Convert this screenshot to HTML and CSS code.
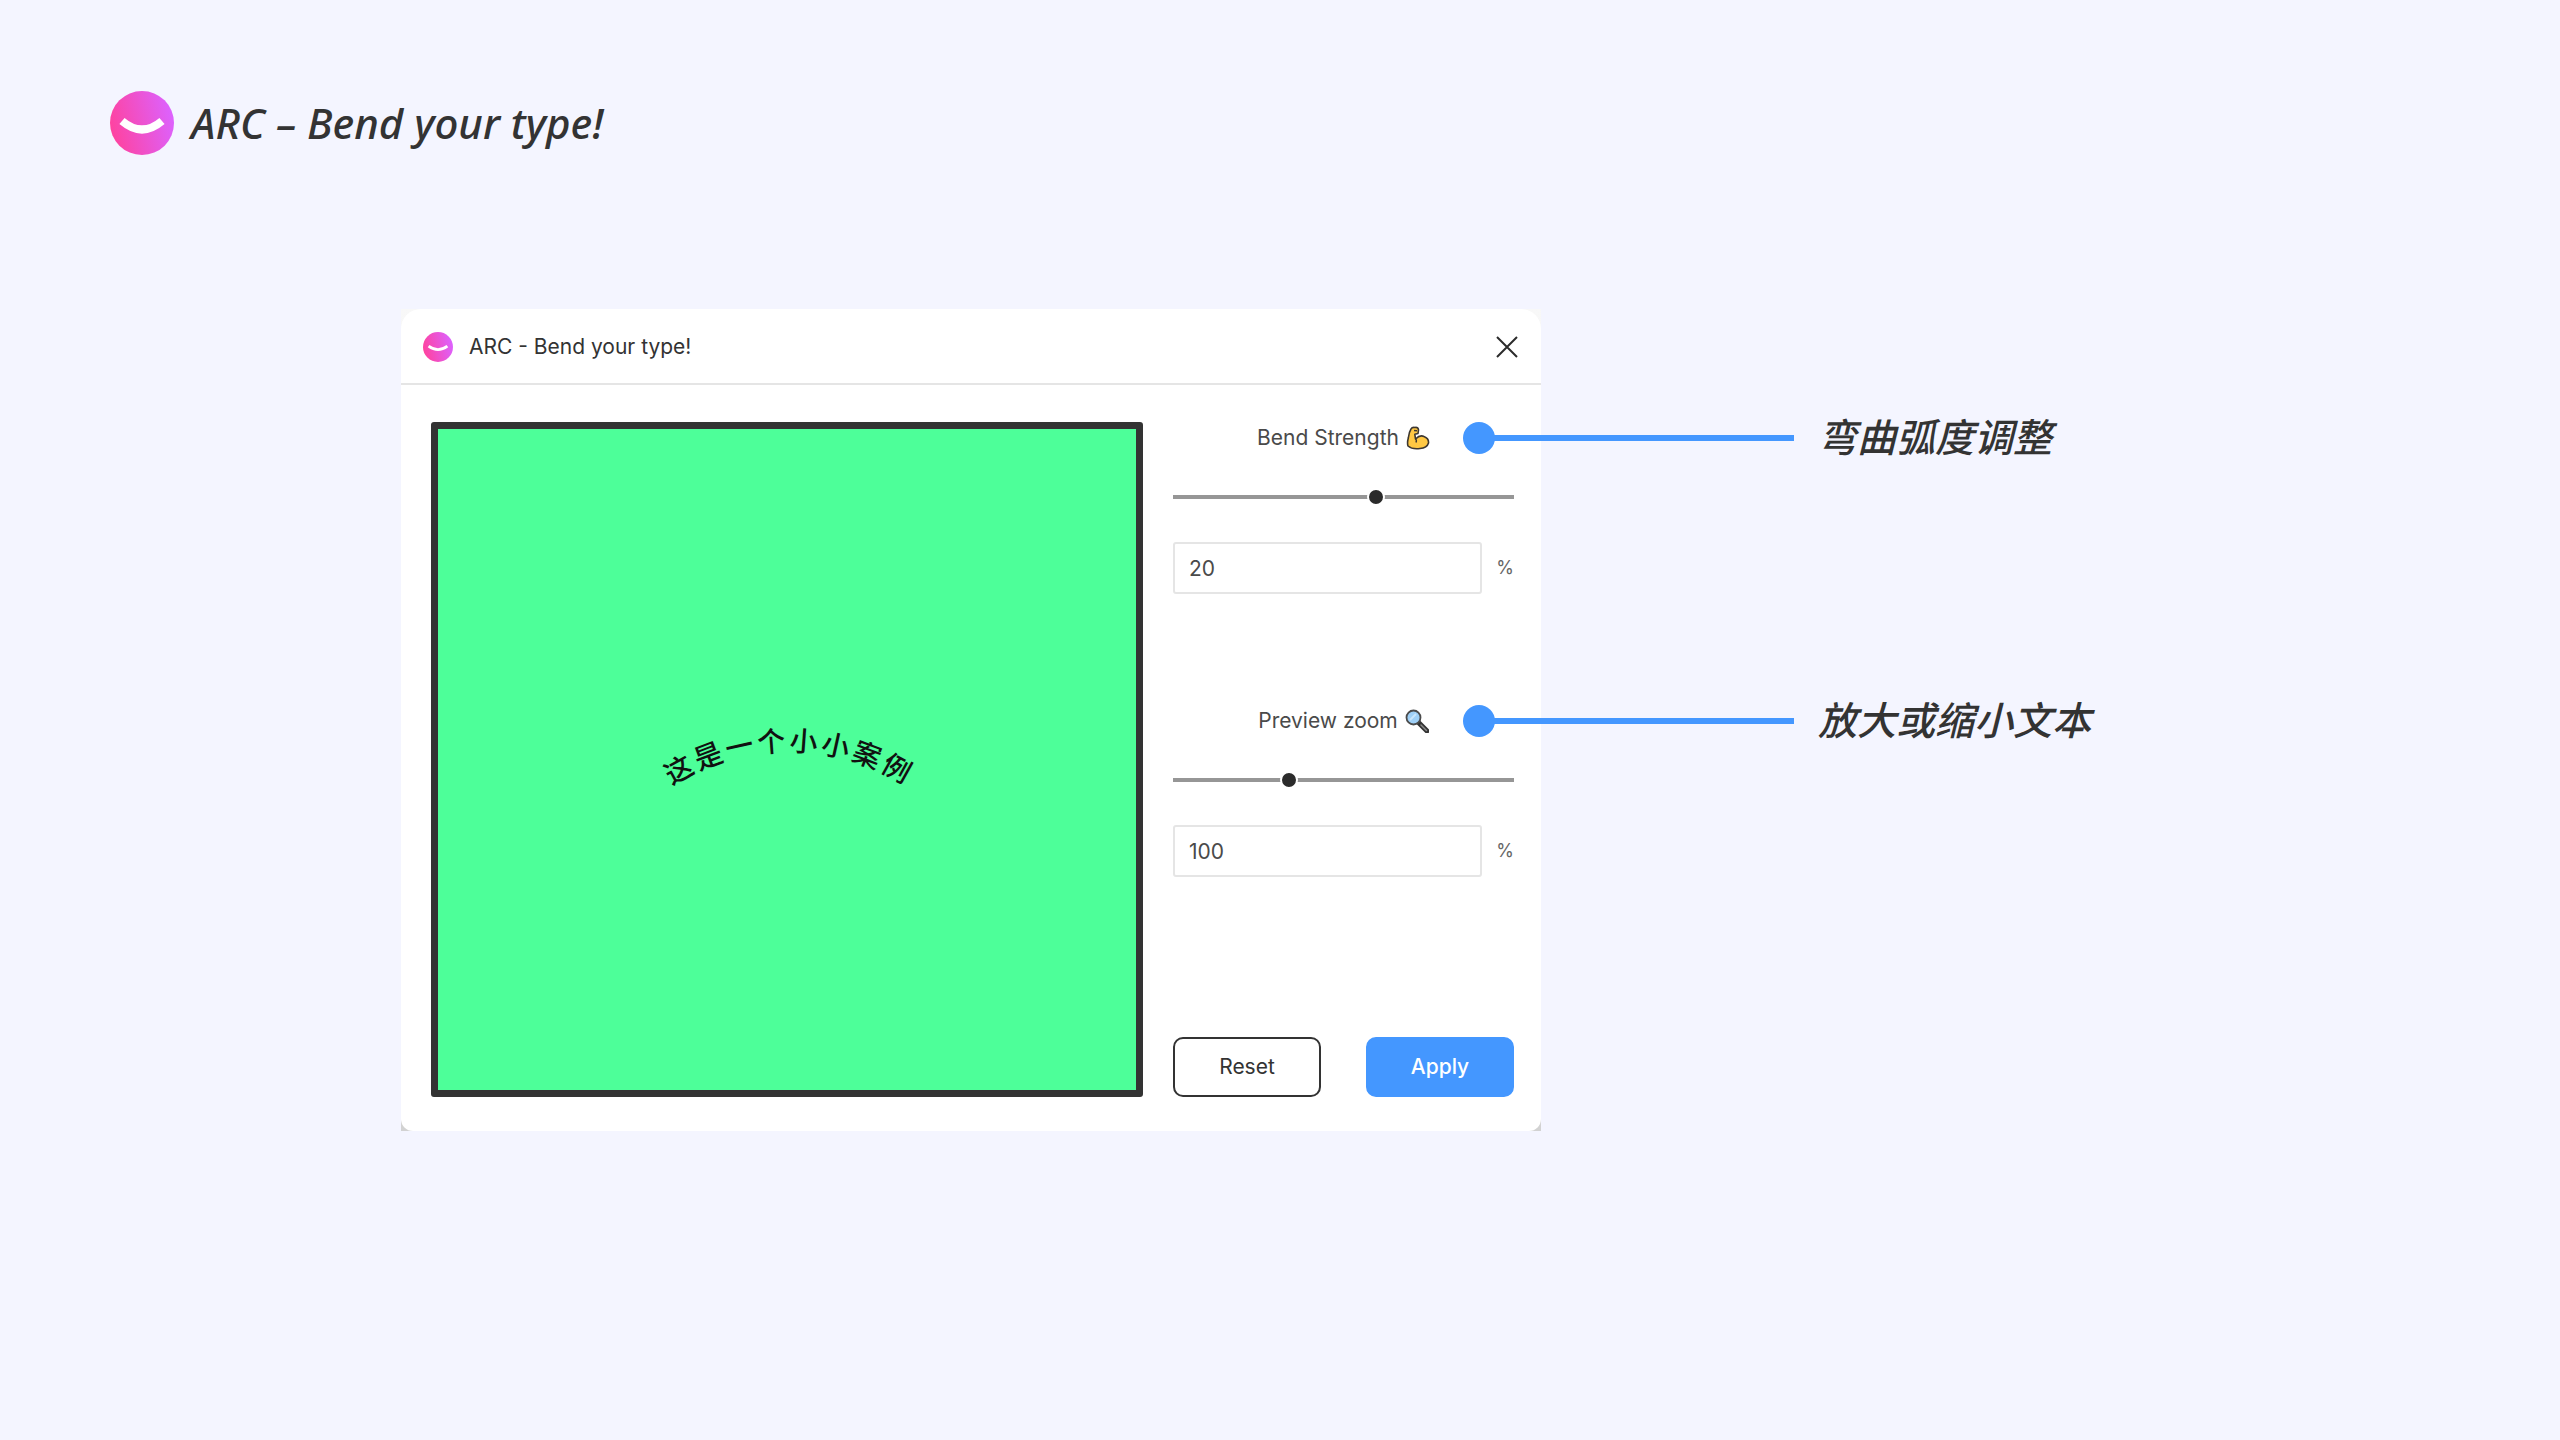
FILE: index.html
```html
<!DOCTYPE html>
<html lang="zh-CN">
<head>
<meta charset="utf-8">
<meta name="viewport" content="width=device-width, initial-scale=1">
<title>ARC – Bend your type!</title>
<link rel="stylesheet" href="styles.css">
</head>
<body>
<header class="brand">
  <svg class="brand-logo" viewBox="0 0 64 64" aria-hidden="true">
    <defs>
      <linearGradient id="pink" x1="0" y1="0.65" x2="1" y2="0.4">
        <stop offset="0" stop-color="#ff429d"/>
        <stop offset="1" stop-color="#dc62ff"/>
      </linearGradient>
    </defs>
    <circle cx="32" cy="32" r="32" fill="url(#pink)"/>
    <path d="M12 30Q32 47 52 30" fill="none" stroke="#fff" stroke-width="8"/>
  </svg>
  <h1 class="brand-title">ARC – Bend your type!</h1>
</header>

<main class="stage">
  <section class="dialog" aria-labelledby="dialog-title">
    <div class="dialog-inner">
      <div class="dialog-bar">
        <svg class="dialog-logo" viewBox="0 0 64 64" aria-hidden="true">
          <circle cx="32" cy="32" r="32" fill="url(#pink)"/>
          <path d="M12 30Q32 45 52 30" fill="none" stroke="#fff" stroke-width="6"/>
        </svg>
        <h2 class="dialog-title" id="dialog-title">ARC - Bend your type!</h2>
        <button class="close" type="button" aria-label="Close">
          <svg viewBox="0 0 22 22" width="22" height="22"><path d="M1 1L21 21M21 1L1 21" stroke="#2b2b2b" stroke-width="2" fill="none"/></svg>
        </button>
      </div>
      <div class="dialog-body">
        <div class="preview">
          <svg class="preview-art" viewBox="0 0 300 100" width="300" height="100">
            <path id="arc" d="M-62 255A214 214 0 0 1 366 255" fill="none"/>
            <text class="arc-text"><textPath href="#arc" startOffset="50%" text-anchor="middle">这是一个小小案例</textPath></text>
          </svg>
        </div>
        <form class="controls">
          <div class="control">
            <label class="control-label" for="bend">Bend Strength
              <svg class="emoji" viewBox="0 0 24 24" aria-hidden="true">
                <path d="M5 3Q6 1 9 1.500Q12 1 12.500 4L12 7.500L8.800 8.200L9.500 13Q14 8.500 18 10.500Q23 12.500 22.500 17Q21 22 14 22.500Q6 23.500 2 20Q1 17 2.300 12Q3 6 5 3Z" fill="#ffc843" stroke="#3d3730" stroke-width="1.600" stroke-linejoin="round"/>
                <path d="M9.500 13Q11 14 10 16.500M8 4.500L11 4.800" fill="none" stroke="#3d3730" stroke-width="1.400"/>
              </svg>
            </label>
            <input class="slider" type="range" min="-100" max="100" value="20" aria-label="Bend Strength slider">
            <div class="field">
              <input class="number" id="bend" type="text" value="20">
              <span class="unit">%</span>
            </div>
            <p class="callout"><i class="dot"></i><i class="line"></i><span>弯曲弧度调整</span></p>
          </div>
          <div class="control">
            <label class="control-label" for="zoom">Preview zoom
              <svg class="emoji" viewBox="0 0 24 24" aria-hidden="true">
                <path d="M14 14L22 22" stroke="#333" stroke-width="5" stroke-linecap="round"/>
                <path d="M16 16L21.500 21.500" stroke="#8a8a8a" stroke-width="1.500" stroke-linecap="round"/>
                <circle cx="8.500" cy="8.500" r="7" fill="#9fd0f7" stroke="#4b4b4b" stroke-width="1.800"/>
                <path d="M5 11L11 5" stroke="#c9e6fc" stroke-width="2"/>
              </svg>
            </label>
            <input class="slider" type="range" min="1" max="300" value="100" aria-label="Preview zoom slider">
            <div class="field">
              <input class="number" id="zoom" type="text" value="100">
              <span class="unit">%</span>
            </div>
            <p class="callout"><i class="dot"></i><i class="line"></i><span>放大或缩小文本</span></p>
          </div>
          <div class="actions">
            <button class="btn" type="reset">Reset</button>
            <button class="btn btn-primary" type="button">Apply</button>
          </div>
        </form>
      </div>
    </div>
  </section>
</main>
</body>
</html>
```
FILE: styles.css
```css
* {
  box-sizing: border-box;
}

body {
  margin: 0;
  min-height: 100vh;
  background: #f4f5ff;
  color: #333;
  font-family: Inter, "Noto Sans CJK SC", sans-serif;
  font-size: 21px;
  line-height: 24px;
}

h1,
h2,
p {
  margin: 0;
}

.brand {
  display: flex;
  align-items: center;
  gap: 17px;
  padding: 91px 110px 0;
}

.brand-logo {
  width: 64px;
  height: 64px;
}

.brand-title {
  font-family: "Noto Sans", sans-serif;
  font-size: 42px;
  line-height: 62px;
  font-style: italic;
  font-weight: 500;
}

.stage {
  display: grid;
  grid-template-columns: 401fr 1140fr 1019fr;
  padding-top: 154px;
}

.dialog {
  grid-column: 2;
  background: linear-gradient(#f8f8f8, #d2d2d2);
}

.dialog-inner {
  background: #fff;
  border-radius: 20px 20px 12px 12px;
}

.dialog-bar {
  display: flex;
  align-items: center;
  gap: 16px;
  height: 76px;
  padding: 1px 23px 0 22px;
  border-bottom: 2px solid #e5e5e5;
}

.dialog-logo {
  width: 30px;
  height: 30px;
}

.dialog-title {
  flex: 1;
  font-size: 21px;
  font-weight: 400;
}

.close {
  display: flex;
  padding: 0;
  border: 0;
  background: none;
}

.dialog-body {
  display: grid;
  grid-template-columns: minmax(0, 712fr) minmax(0, 341fr);
  gap: 30px;
  padding: 37px 27px 34px 30px;
}

.preview {
  display: flex;
  align-items: center;
  justify-content: center;
  min-height: 675px;
  border: 7px solid #333;
  border-radius: 3px;
  background: #4dff99;
}

.preview-art {
  overflow: visible;
}

.arc-text {
  font-family: "Noto Sans CJK SC", sans-serif;
  font-size: 28px;
  font-weight: 500;
  letter-spacing: 3px;
  fill: #111;
}

.controls {
  display: flex;
  flex-direction: column;
}

.control {
  position: relative;
  display: flex;
  flex-direction: column;
  height: 283px;
}

.control-label {
  display: flex;
  align-items: center;
  justify-content: center;
  gap: 7px;
  height: 32px;
  color: #4a4a4a;
}

.emoji {
  width: 24px;
  height: 24px;
}

.slider {
  appearance: none;
  width: 100%;
  height: 20px;
  margin: 33px 0 35px;
  background: linear-gradient(#969696, #969696) center / 100% 4px no-repeat;
}

.slider::-webkit-slider-thumb {
  appearance: none;
  width: 18px;
  height: 18px;
  border: 2px solid #fff;
  border-radius: 50%;
  background: #2b2b2b;
}

.field {
  display: flex;
  align-items: center;
  gap: 14px;
}

.number {
  flex: 1;
  min-width: 0;
  height: 52px;
  padding: 0 14px;
  border: 2px solid #e5e5e5;
  border-radius: 3px;
  background: #fff;
  color: #4a4a4a;
  font: inherit;
}

.unit {
  color: #666;
  font-size: 18px;
}

.callout {
  position: absolute;
  top: 0;
  left: calc(100% - 51px);
  display: flex;
  align-items: center;
  height: 32px;
  font-size: 39px;
  font-style: italic;
  font-weight: 500;
  white-space: nowrap;
}

.dot {
  width: 32px;
  height: 32px;
  border-radius: 50%;
  background: #4497ff;
}

.line {
  width: 300px;
  height: 6px;
  margin-left: -1px;
  margin-right: 24px;
  background: #4497ff;
}

.actions {
  display: flex;
  justify-content: space-between;
  gap: 45px;
  margin-top: auto;
}

.btn {
  flex: 1;
  height: 60px;
  border: 2px solid #333;
  border-radius: 10px;
  background: #fff;
  color: #333;
  font: inherit;
}

.btn-primary {
  border-color: #4497ff;
  background: #4497ff;
  color: #fff;
  font-weight: 500;
}
```
